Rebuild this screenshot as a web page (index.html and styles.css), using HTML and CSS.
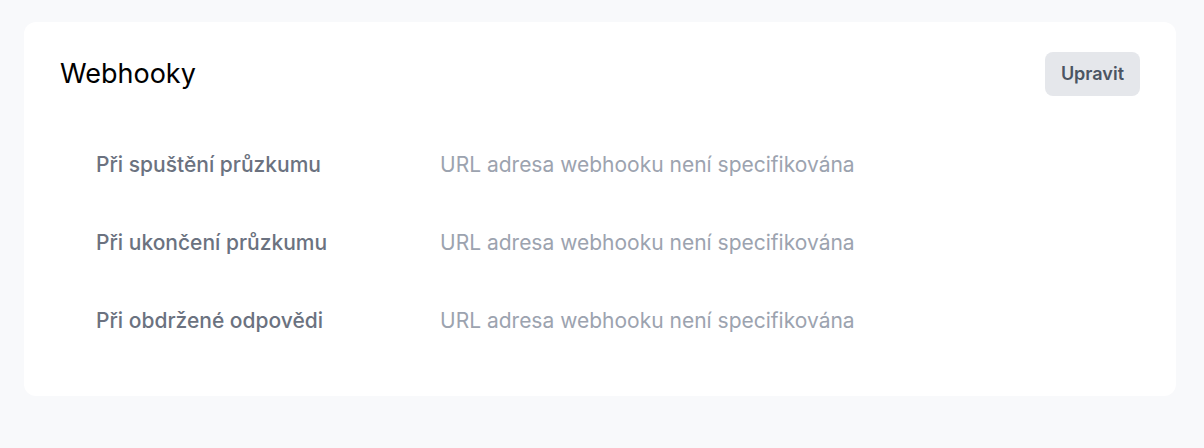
FILE: index.html
```html
<!DOCTYPE html>
<html lang="cs">
<head>
    <meta charset="UTF-8">
    <meta name="viewport" content="width=device-width, initial-scale=1.0">
    <title>Webhooky</title>
    <link rel="stylesheet" href="styles.css">
</head>
<body>
    <div class="card">
        <div class="card-header">
            <h2>Webhooky</h2>
            <button class="btn">Upravit</button>
        </div>

        <div class="hook-list">
            <div class="hook-row">
                <span class="hook-label">Při spuštění průzkumu</span>
                <span class="hook-value">URL adresa webhooku není specifikována</span>
            </div>
            <div class="hook-row">
                <span class="hook-label">Při ukončení průzkumu</span>
                <span class="hook-value">URL adresa webhooku není specifikována</span>
            </div>
            <div class="hook-row">
                <span class="hook-label">Při obdržené odpovědi</span>
                <span class="hook-value">URL adresa webhooku není specifikována</span>
            </div>
        </div>
    </div>
</body>
</html>
```

FILE: styles.css
```css
* {
    margin: 0;
    padding: 0;
    box-sizing: border-box;
}

body {
    font-family: Inter, "Noto Sans", sans-serif;
    background: #f8f9fb;
    padding: 22px 28px 52px 24px;
}

.card {
    background: white;
    border-radius: 12px;
    padding: 30px 36px 36px;
}

.card-header {
    display: flex;
    align-items: center;
    justify-content: space-between;
    margin-bottom: 30px;
}

.card-header h2 {
    font-size: 27px;
    font-weight: 400;
    color: #000;
    line-height: 36px;
}

.btn {
    font-family: inherit;
    font-size: 18px;
    font-weight: 600;
    line-height: 24px;
    color: #4b5563;
    background: #e5e7eb;
    border: none;
    border-radius: 8px;
    padding: 10px 16px;
    cursor: pointer;
}

.hook-list {
    padding: 0 36px;
}

.hook-row {
    display: flex;
    padding: 25px 0;
    font-size: 21px;
    line-height: 28px;
}

.hook-label {
    width: 344px;
    color: #6b7280;
    font-weight: 500;
}

.hook-value {
    color: #9ca3af;
}
```
